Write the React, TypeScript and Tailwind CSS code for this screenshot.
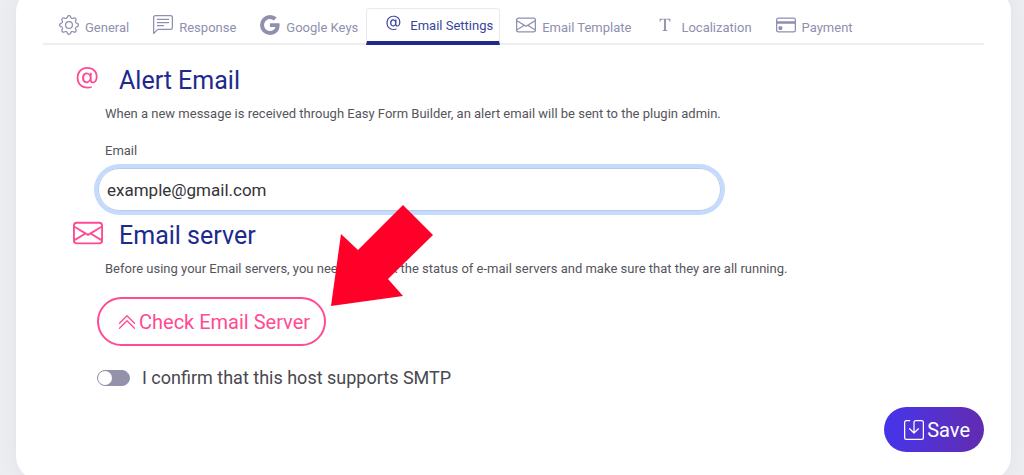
import { ReactNode, useState } from "react";
import {
  BsAt,
  BsChatLeftText,
  BsChevronDoubleUp,
  BsCreditCard,
  BsEnvelope,
  BsFonts,
  BsGear,
  BsGoogle,
  BsSave,
} from "react-icons/bs";

const tabs = [
  { name: "General", icon: BsGear },
  { name: "Response", icon: BsChatLeftText },
  { name: "Google Keys", icon: BsGoogle },
  { name: "Email Settings", icon: BsAt },
  { name: "Email Template", icon: BsEnvelope },
  { name: "Localization", icon: BsFonts },
  { name: "Payment", icon: BsCreditCard },
];

const SectionTitle = ({ icon, children }: { icon: ReactNode; children: ReactNode }) => (
  <h2 className="flex items-start text-[25px] leading-9 text-[#202a8d]">
    <span className="w-[46px] text-[#ff4b93]">{icon}</span>
    {children}
  </h2>
);

const App = () => {
  const [active, setActive] = useState("Email Settings");
  const [email, setEmail] = useState("example@gmail.com");
  const [smtp, setSmtp] = useState(false);

  return (
    <div className="h-screen overflow-hidden bg-[#ecedf0] pl-4 pr-[13px] font-[Roboto,sans-serif]">
      <main className="-mt-3 rounded-3xl bg-white px-[27px] pb-7 pt-5 shadow-[0_0_16px_#dfe2ea]">
        <nav className="flex items-end border-b-2 border-[#eeeef1]" role="tablist">
          {tabs.map(({ name, icon: Icon }) => (
            <button
              key={name}
              type="button"
              role="tab"
              aria-selected={active === name}
              onClick={() => setActive(name)}
              className={
                active === name
                  ? "-mb-0.5 flex h-[37px] items-start gap-1.5 whitespace-nowrap rounded-t border-x border-t border-b-4 border-[#e9e9ef] border-b-[#202a8d] px-[17px] pr-1.5 pt-1 text-[13px] leading-[26px] text-[#39459b]"
                  : "flex h-[35px] items-start gap-1.5 whitespace-nowrap pl-4 pr-2 pt-[7px] text-[13px] leading-[26px] text-[#8f8fb0]"
              }
            >
              <Icon className="size-5 shrink-0" />
              {name}
            </button>
          ))}
        </nav>

        <section className="relative pl-[30px] pt-[18px] text-[#55555c]">
          <SectionTitle icon={<BsAt className="size-[30px]" />}>Alert Email</SectionTitle>
          <p className="ml-8 mt-[5px] text-[13px] leading-5">
            When a new message is received through Easy Form Builder, an alert email will be sent
            to the plugin admin.
          </p>
          <label htmlFor="email" className="ml-8 mt-[17px] block text-[13px] leading-5">
            Email
          </label>
          <input
            id="email"
            type="email"
            value={email}
            onChange={(e) => setEmail(e.target.value)}
            className="ml-[25px] mt-[7px] block h-[43px] w-13/19 rounded-full border border-[#b9c9e2] px-2 text-[17px] text-[#333338] outline-none ring-4 ring-[#c2dbfe]"
          />

          <div className="mt-[7px]">
            <SectionTitle icon={<BsEnvelope className="size-[30px]" />}>Email server</SectionTitle>
          </div>
          <p className="ml-8 mt-[5px] text-[13px] leading-5">
            Before using your Email servers, you need to check the status of e-mail servers and
            make sure that they are all running.
          </p>
          <button
            type="button"
            className="ml-6 mt-[18px] flex h-[49px] items-center gap-0.5 rounded-full border-2 border-[#ff4b93] pl-[18px] pr-3.5 text-xl text-[#ff4b93]"
          >
            <BsChevronDoubleUp className="size-5" />
            Check Email Server
          </button>

          <label className="ml-6 mt-5 flex w-fit items-center gap-3 text-lg leading-6 text-[#484850]">
            <input
              type="checkbox"
              checked={smtp}
              onChange={(e) => setSmtp(e.target.checked)}
              className="h-4 w-[33px] appearance-none rounded-full border border-[#9392aa] bg-[#9392aa] before:block before:size-3.5 before:rounded-full before:bg-white checked:border-[#ff4b93] checked:bg-[#ff4b93] checked:before:ml-auto"
            />
            I confirm that this host supports SMTP
          </label>

          {/* pointer to the check button */}
          <svg
            viewBox="0 0 102 101"
            className="pointer-events-none absolute left-[288px] top-[160px] w-[102px]"
            fill="#ff0029"
            aria-hidden="true"
          >
            <path d="M0 101 10 29 27 45 72 0 102 30 57 74 72 91Z" />
          </svg>
        </section>

        <div className="mt-[17px] flex justify-end">
          <button
            type="button"
            className="flex h-[45px] items-center gap-[3px] rounded-full bg-linear-to-r from-[#4534eb] to-[#612bb0] pl-5 pr-3.5 text-xl text-white"
          >
            <BsSave className="size-5" />
            Save
          </button>
        </div>
      </main>
    </div>
  );
};

export default App;
